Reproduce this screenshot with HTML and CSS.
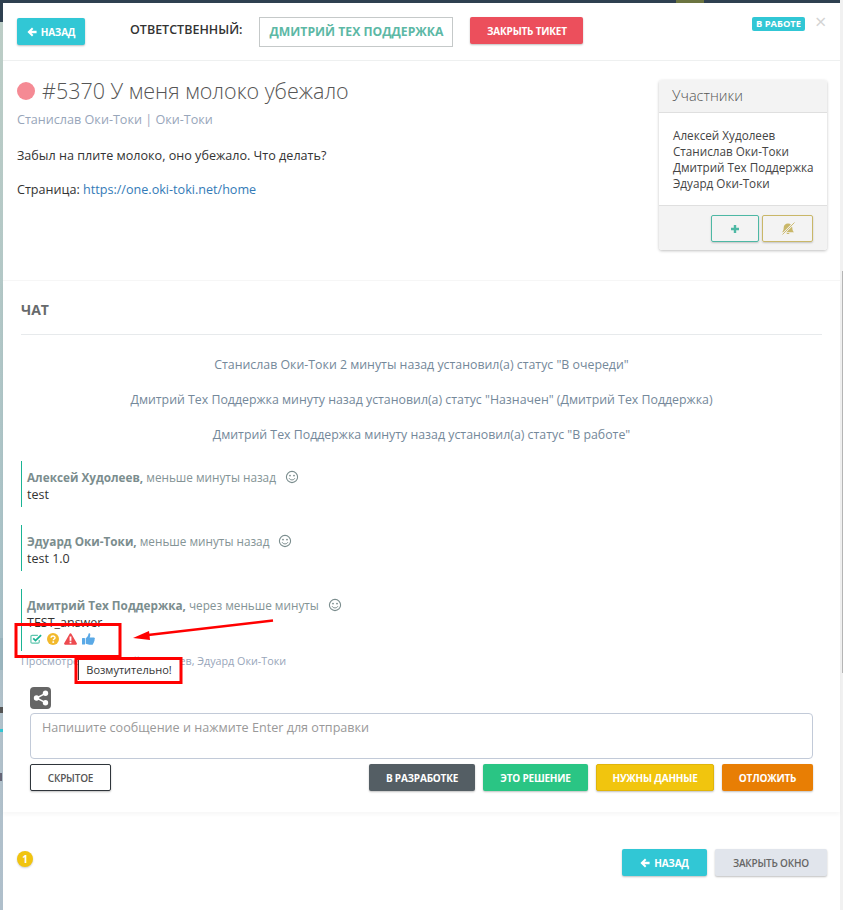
FILE: index.html
```html
<!DOCTYPE html>
<html>
<head>
<meta charset="utf-8">
<title>Тикет #5370</title>
<link rel="stylesheet" href="styles.css">
</head>
<body>
<svg width="0" height="0" class="defs">
  <symbol id="i-back" viewBox="0 0 12 12"><path d="M6 .6 L7.700 2.300 L5.400 4.500 H11.500 V7.500 H5.400 L7.700 9.700 L6 11.400 L.5 6 Z"/></symbol>
  <symbol id="i-smile" viewBox="0 0 14 14"><circle cx="7" cy="7" r="5.600" fill="none" stroke="currentColor" stroke-width="1.100"/><circle cx="5" cy="5.600" r=".9"/><circle cx="9" cy="5.600" r=".9"/><path d="M4.200 8.300 C5 10.400 9 10.400 9.800 8.300" fill="none" stroke="currentColor" stroke-width="1"/></symbol>
</svg>

<div class="modal">
  <!-- header -->
  <div class="top">
    <button class="btn btn-teal btn-back"><svg class="ic"><use href="#i-back"/></svg>НАЗАД</button>
    <span class="owner-label">ОТВЕТСТВЕННЫЙ:</span>
    <span class="owner-box">ДМИТРИЙ ТЕХ ПОДДЕРЖКА</span>
    <button class="btn btn-red">ЗАКРЫТЬ ТИКЕТ</button>
    <span class="status">В РАБОТЕ</span>
    <span class="close">×</span>
  </div>

  <!-- ticket -->
  <div class="ticket">
    <div class="ticket-main">
      <h2 class="ticket-title"><span class="dot"></span>#5370 У меня молоко убежало</h2>
      <div class="ticket-author">Станислав Оки-Токи | Оки-Токи</div>
      <p class="ticket-text">Забыл на плите молоко, оно убежало. Что делать?</p>
      <p class="ticket-text">Страница: <a href="#">https://one.oki-toki.net/home</a></p>
    </div>
    <div class="card">
      <div class="card-head">Участники</div>
      <div class="card-body">
        <div>Алексей Худолеев</div>
        <div>Станислав Оки-Токи</div>
        <div>Дмитрий Тех Поддержка</div>
        <div>Эдуард Оки-Токи</div>
      </div>
      <div class="card-foot">
        <button class="btn-line line-green"><svg width="8" height="8" viewBox="0 0 10 10"><path d="M3.500 0h3v3.500H10v3H6.500V10h-3V6.500H0v-3h3.500z"/></svg></button>
        <button class="btn-line line-yellow"><svg width="14" height="13" viewBox="0 0 14 13"><path d="M7 1.500c2.500 0 4.300 1.700 4.300 4.200 0 2.300.7 3.600 1.700 4.600H1c1-1 1.700-2.300 1.700-4.600C2.700 3.200 4.500 1.500 7 1.500z"/><path d="M5.500 11h3c-.2 1.300-2.800 1.300-3 0z"/><path d="M13.500 .5 L1.500 12.500" stroke="#f3f3f3" stroke-width="2.200" fill="none"/><path d="M13.500 .5 L1.500 12.500" stroke="#c9b768" stroke-width=".9" fill="none"/></svg></button>
      </div>
    </div>
  </div>

  <!-- chat -->
  <div class="chat">
    <h3 class="chat-title">ЧАТ</h3>
    <div class="log">Станислав Оки-Токи 2 минуты назад установил(а) статус "В очереди"</div>
    <div class="log">Дмитрий Тех Поддержка минуту назад установил(а) статус "Назначен" (Дмитрий Тех Поддержка)</div>
    <div class="log">Дмитрий Тех Поддержка минуту назад установил(а) статус "В работе"</div>

    <div class="msg">
      <div class="msg-head"><b>Алексей Худолеев,</b> меньше минуты назад <svg class="smile"><use href="#i-smile"/></svg></div>
      <div class="msg-text">test</div>
    </div>
    <div class="msg">
      <div class="msg-head"><b>Эдуард Оки-Токи,</b> меньше минуты назад <svg class="smile"><use href="#i-smile"/></svg></div>
      <div class="msg-text">test 1.0</div>
    </div>
    <div class="msg msg-last">
      <div class="msg-head"><b>Дмитрий Тех Поддержка,</b> через меньше минуты <svg class="smile"><use href="#i-smile"/></svg></div>
      <div class="msg-text">TEST_answer</div>
      <div class="reactions">
        <svg width="12" height="12" viewBox="0 0 13 12"><path d="M10 7v2.200c0 .8-.6 1.300-1.300 1.300H2.300C1.500 10.500 1 10 1 9.200V3.300C1 2.500 1.500 2 2.300 2H8.500" fill="none" stroke="#5fc6ae" stroke-width="1.300"/><path d="M3.500 5.200 L6 7.700 L12 1.700" fill="none" stroke="#1ab394" stroke-width="1.900"/></svg>
        <svg width="12" height="12" viewBox="0 0 12 12"><circle cx="6" cy="6" r="6" fill="#f2b92c"/><path d="M4 4.700C4.100 2.400 8.100 2.500 8 4.700C8 6 6.300 6 6.300 7.200" fill="none" stroke="#fff" stroke-width="1.400"/><rect x="5.400" y="8.300" width="1.700" height="1.600" fill="#fff"/></svg>
        <svg width="13" height="12" viewBox="0 0 13 12"><path d="M6.500 .2 C7 .2 7.300 .5 7.500 .9 L12.800 10.300 C13.200 11.100 12.700 11.800 12 11.800 H1 C.3 11.800 -.2 11.100 .2 10.300 L5.500 .9 C5.700 .5 6 .2 6.500 .2Z" fill="#ed4a4f"/><rect x="5.600" y="3.500" width="1.800" height="4.300" fill="#fff"/><rect x="5.600" y="8.700" width="1.800" height="1.700" fill="#fff"/></svg>
        <svg width="13" height="12" viewBox="0 0 13 12"><rect x="0" y="5" width="3" height="6.500" rx=".5" fill="#5aa9e6"/><path d="M3.700 5.300 C5 4.500 6.300 2.800 6.500 .8 C6.600 .1 8.300 0 8.300 1.800 C8.300 2.900 7.900 3.600 7.700 4.400 H11.500 C13.200 4.400 13.200 6.300 12.300 6.700 C12.800 7.500 12.500 8.400 11.900 8.700 C12.100 9.500 11.700 10.200 11.200 10.400 C11.200 11.300 10.600 11.700 9.800 11.700 H7.500 C6 11.700 5 11.100 3.700 10.800 Z" fill="#5aa9e6"/></svg>
      </div>
    </div>
    <div class="seen">Просмотрели: Алексей Худолеев, Эдуард Оки-Токи</div>

    <div class="reply">
      <span class="share"><svg width="16" height="16" viewBox="0 0 16 16"><circle cx="12.500" cy="3.300" r="2.700" fill="#fff"/><circle cx="12.500" cy="12.700" r="2.700" fill="#fff"/><circle cx="3.500" cy="8" r="2.700" fill="#fff"/><path d="M12.500 3.300 L3.500 8 L12.500 12.700" fill="none" stroke="#fff" stroke-width="1.500"/></svg></span>
      <div class="input">Напишите сообщение и нажмите Enter для отправки</div>
      <div class="actions">
        <button class="btn btn-hidden">СКРЫТОЕ</button>
        <span class="spacer"></span>
        <button class="btn btn-dark">В РАЗРАБОТКЕ</button>
        <button class="btn btn-green">ЭТО РЕШЕНИЕ</button>
        <button class="btn btn-yellow">НУЖНЫ ДАННЫЕ</button>
        <button class="btn btn-orange">ОТЛОЖИТЬ</button>
      </div>
    </div>
  </div>

  <!-- footer -->
  <div class="foot">
    <span class="count">1</span>
    <span class="spacer"></span>
    <button class="btn btn-teal btn-back2"><svg class="ic"><use href="#i-back"/></svg>НАЗАД</button>
    <button class="btn btn-gray">ЗАКРЫТЬ ОКНО</button>
  </div>
</div>

<!-- annotation on top of the screenshot -->
<div class="tip">Возмутительно!</div>
<svg class="marks" width="843" height="910" viewBox="0 0 843 910">
  <rect x="16" y="624.500" width="104" height="32" fill="none" stroke="#f00" stroke-width="3"/>
  <rect x="76" y="658.500" width="105" height="24" fill="none" stroke="#f00" stroke-width="3"/>
  <path d="M273 620.500 L148 635" stroke="#f00" stroke-width="2.500"/>
  <path d="M133 638 L149 631 L150 640 Z" fill="#f00"/>
</svg>
</body>
</html>
```

FILE: styles.css
```css
* {box-sizing: border-box;}

html, body {
  margin: 0;
  height: 910px;
  overflow: hidden;
}

/* what shows of the page behind the modal, plus its scrollbar */
body {
  position: relative;
  font-family: "Open Sans", sans-serif;
  font-size: 13px;
  color: #333;
  padding: 3px 3px 0 3px;
  background:
    linear-gradient(#6b7440, #6b7440) 676px 0 / 28px 3px no-repeat,
    linear-gradient(#2f4050, #2f4050) 0 0 / 840px 3px no-repeat,
    linear-gradient(#b5b5b5, #b5b5b5) 842px 271px / 1px 402px no-repeat,
    linear-gradient(#f1f1f1, #f1f1f1) 840px 0 / 3px 910px no-repeat,
    linear-gradient(#555, #555) 0 707px / 3px 6px no-repeat,
    linear-gradient(#31c7d5, #31c7d5) 0 729px / 3px 3px no-repeat,
    linear-gradient(#667, #667) 0 773px / 2px 8px no-repeat,
    linear-gradient(#9ab5be, #9ab5be) 0 638px / 3px 32px no-repeat,
    linear-gradient(#2f4050 0, #2f4050 22px, #bccdc6 22px, #a9c2c7 560px, #a6bec6 636px, #b2c2cb 700px, #afbfcb 910px);
}

.defs {position: absolute;}

.modal {
  background: #fff;
  height: 907px;
  display: flex;
  flex-direction: column;
}

button {
  font-family: inherit;
  cursor: pointer;
}

.btn {
  border: 0;
  border-radius: 2px;
  font-size: 10px;
  letter-spacing: -.2px;
  font-weight: 700;
  color: #fff;
  height: 27px;
  padding: 0;
  box-shadow: 0 1px 2px rgba(0,0,0,.25);
}

.btn-teal {background: #31c7d5;}
.btn-red {background: #ec4f5c; width: 113px;}
.btn-dark {background: #545e64; width: 106px;}
.btn-green {background: #2ac584; width: 105px;}
.btn-yellow {background: #f1c50e; width: 118px; border: 1px solid #e0b50a;}
.btn-orange {background: #e87e04; width: 91px;}
.btn-gray {background: #e1e5ec; color: #666; width: 112px; font-weight: 600;}
.btn-hidden {
  background: #fff;
  border: 1px solid #2f353b;
  color: #555;
  width: 81px;
  font-weight: 600;
}

.btn-back, .btn-back2 {
  display: flex;
  align-items: center;
  justify-content: center;
  gap: 4px;
}

.btn-back {width: 68px; margin-top: 1px; margin-left: 14px;}
.btn-back2 {width: 85px;}

.ic {
  width: 10px;
  height: 10px;
  fill: #fff;
}

/* header */
.top {
  position: relative;
  height: 58px;
  padding-top: 14px;
  border-bottom: 1px solid #eef0f0;
  display: flex;
  align-items: flex-start;
  flex: none;
}

.owner-label {
  margin-left: 45px;
  margin-top: 4px;
  font-size: 12.500px;
  font-weight: 600;
  color: #333;
}

.owner-box {
  margin-left: 17px;
  width: 194px;
  height: 30px;
  border: 1px solid #c5c9c9;
  color: #5cb8a5;
  font-size: 12.200px;
  font-weight: 700;
  line-height: 28px;
  text-align: center;
}

.btn-red {margin-left: 17px; margin-top: 0;}

.status {
  position: absolute;
  left: 749px;
  top: 14px;
  background: #31c7d5;
  color: #fff;
  font-size: 9.300px;
  font-weight: 700;
  border-radius: 2px;
  height: 14px;
  line-height: 14px;
  width: 53px;
  text-align: center;
}

.close {
  position: absolute;
  left: 812px;
  top: 7px;
  font-size: 20px;
  line-height: 24px;
  color: #d3d3d3;
}

/* ticket */
.ticket {
  height: 220px;
  padding: 18px 13px 0 14px;
  border-bottom: 1px solid #f6f6f6;
  display: flex;
  flex: none;
}

.ticket-main {flex: 1;}

.ticket-title {
  margin: 0;
  font-size: 21.500px;
  font-weight: 300;
  line-height: 24px;
  color: #555;
  display: flex;
  align-items: center;
}

.dot {
  width: 18px;
  height: 18px;
  border-radius: 50%;
  background: #f58a94;
  margin-right: 7px;
}

.ticket-author {
  margin-top: 8px;
  font-size: 12.600px;
  color: #98a6ba;
}

.ticket-text {
  margin: 19px 0 0 0;
  font-size: 12.600px;
  line-height: 18px;
}

.ticket-text + .ticket-text {margin-top: 16px;}

.ticket-text a {
  color: #337ab7;
  text-decoration: none;
}

.card {
  width: 168px;
  height: 170px;
  margin-top: 1px;
  border-radius: 3px;
  box-shadow: 0 1px 3px rgba(0,0,0,.25);
  display: flex;
  flex-direction: column;
}

.card-head {
  height: 33px;
  background: #f3f3f3;
  border-bottom: 1px solid #dfdfdf;
  padding-left: 13px;
  font-size: 14.500px;
  font-weight: 300;
  line-height: 31px;
  color: #555;
  border-radius: 3px 3px 0 0;
}

.card-body {
  height: 92px;
  padding: 14px 0 0 14px;
  font-size: 11.700px;
  line-height: 16px;
  color: #444;
}

.card-foot {
  flex: 1;
  background: #f3f3f3;
  border-top: 1px solid #dfdfdf;
  padding: 9px 14px 0 0;
  display: flex;
  justify-content: flex-end;
  gap: 3px;
  border-radius: 0 0 3px 3px;
}

.btn-line {
  height: 27px;
  background: transparent;
  border-radius: 2px;
  padding: 0;
  display: flex;
  align-items: center;
  justify-content: center;
  box-shadow: 0 1px 2px rgba(0,0,0,.2);
}

.line-green {width: 48px; border: 1px solid #4db8a4; fill: #4db8a4;}
.line-yellow {width: 51px; border: 1px solid #c9b768; fill: #c9b768;}

/* chat */
.chat {
  height: 531px;
  padding: 0 18px 0 18px;
  box-shadow: 0 3px 4px rgba(0,0,0,.03);
  flex: none;
}

.chat-title {
  margin: 0 0 21px 0;
  height: 54px;
  padding-top: 19px;
  font-size: 14px;
  font-weight: 700;
  line-height: 19px;
  color: #676a6c;
  border-bottom: 1px solid #e7eaec;
}

.log {
  height: 18px;
  margin-bottom: 17px;
  text-align: center;
  line-height: 18px;
  font-size: 12.350px;
  color: #74889a;
}

.msg {
  margin-top: 18px;
  height: 46px;
  border-left: 1px solid #1ab394;
  padding: 8px 0 0 5px;
  line-height: 17px;
}

.log + .msg {margin-top: 9px;}

.msg-last {height: 62px; position: relative;}

.msg-head {
  color: #849496;
  font-size: 11.750px;
  display: flex;
  align-items: center;
  white-space: pre;
}

.msg-head b {font-weight: 700; color: #7b8d8e;}

.smile {
  width: 14px;
  height: 14px;
  fill: #7b8d8e;
  color: #7b8d8e;
  margin-left: 6px;
  margin-top: -2px;
}

.msg-text {color: #333; font-size: 12.500px;}

.reactions {
  display: flex;
  gap: 5px;
  margin: 2px 0 0 3px;
  align-items: center;
}

.seen {
  margin-top: 2px;
  font-size: 10.750px;
  line-height: 16px;
  color: #98a6ba;
}

.reply {
  padding: 0 9px;
  margin-top: 18px;
}

.share {
  display: flex;
  width: 21px;
  height: 22px;
  background: #666;
  border-radius: 4px;
  align-items: center;
  justify-content: center;
}

.input {
  height: 46px;
  margin-top: 4px;
  border: 1px solid #c2cad8;
  border-radius: 4px;
  padding: 4px 11px;
  font-size: 12.600px;
  line-height: 20px;
  color: #999;
}

.actions {
  display: flex;
  gap: 8px;
  margin-top: 5px;
}

.spacer {flex: 1;}

/* footer */
.foot {
  display: flex;
  gap: 8px;
  align-items: flex-start;
  padding: 37px 13px 0 14px;
}

.count {
  width: 16px;
  height: 16px;
  margin-top: 2px;
  border-radius: 50%;
  background: #f1c40f;
  color: #fff;
  font-size: 10px;
  font-weight: 700;
  line-height: 16px;
  text-align: center;
  box-shadow: 0 1px 2px rgba(0,0,0,.2);
}

/* annotation */
.tip {
  position: absolute;
  left: 78px;
  top: 660px;
  width: 101px;
  height: 20px;
  background: #fff;
  border-left: 1px solid #333;
  font-size: 11px;
  line-height: 20px;
  text-align: center;
  color: #333;
}

.marks {
  position: absolute;
  left: 0;
  top: 0;
  pointer-events: none;
}
```
